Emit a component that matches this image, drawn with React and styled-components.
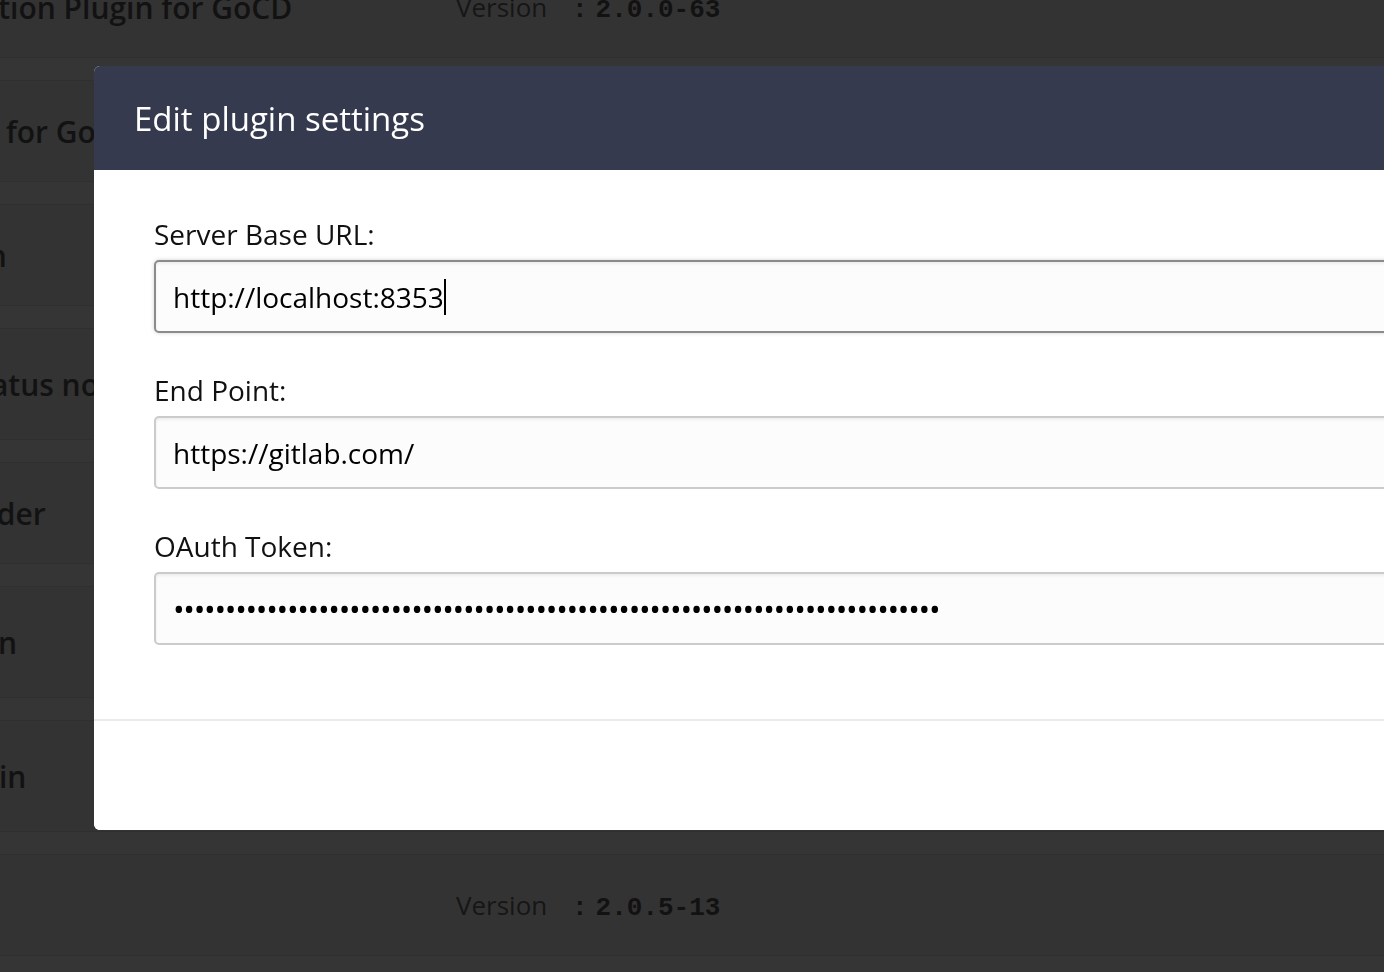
import React from "react";
import styled, { createGlobalStyle } from "styled-components";

const GlobalStyle = createGlobalStyle`
  html, body {
    margin: 0;
    padding: 0;
    background: #353535;
    overflow: hidden;
    font-family: "Open Sans", "Liberation Sans", sans-serif;
  }
  * { box-sizing: border-box; }
`;

/* ---------- dimmed plugin list behind the dialog ---------- */

const Page = styled.div`
  display: flex;
  flex-direction: column;
  gap: 22px;
  margin-top: -44px;
  margin-left: -348px;
  width: 1800px;
  height: 1100px;
  background: #353535;
`;

const PluginCard = styled.div`
  display: flex;
  align-items: center;
  height: ${(p) => p.$height}px;
  background: #333333;
  border-top: 1px solid #2f2f2f;
  border-bottom: 1px solid #2f2f2f;
`;

const PluginName = styled.div`
  flex: 0 0 804px;
  font-size: 30px;
  font-weight: 600;
  color: #121212;
  white-space: nowrap;
  overflow: hidden;
`;

const VersionBox = styled.div`
  display: flex;
  align-items: baseline;
  color: #161616;
`;

const VersionLabel = styled.span`
  flex: 0 0 116px;
  font-size: 26px;
  font-weight: 400;
`;

const Mono = styled.span`
  font-family: "Liberation Mono", "DejaVu Sans Mono", monospace;
  font-size: 26px;
  font-weight: 700;
  color: #121212;
  margin-left: ${(p) => (p.$gap ? "8px" : "0")};
`;

const plugins = [
  { name: "Password File Authorization Plugin for GoCD", version: "2.0.0-63", h: 102 },
  { name: "AD Authorization Plugin for GoCD", version: "2.0.1-41", h: 102 },
  { name: "AWS Elastic Agent Plugin", version: "1.0.2-91", h: 102 },
  { name: "GitHub Pull Requests status notifier", version: "1.2.0-12", h: 112 },
  { name: "GoCD YAML Configs Loader", version: "0.6.2-8", h: 102 },
  { name: "Kubernetes Elastic Plugin", version: "1.0.0-52", h: 112 },
  { name: "Okta Authorization Plugin", version: "1.0.0-4", h: 112 },
  { name: "Script Executor", version: "2.0.5-13", h: 102 },
];

/* ---------- dialog ---------- */

const Dialog = styled.div`
  position: fixed;
  top: 66px;
  left: 94px;
  width: 1340px;
  height: 764px;
  background: #ffffff;
  border-radius: 6px;
  overflow: hidden;
  display: flex;
  flex-direction: column;
`;

const DialogHeader = styled.header`
  flex: 0 0 104px;
  display: flex;
  align-items: center;
  padding-left: 40px;
  background: #353a4f;
`;

const DialogTitle = styled.h1`
  margin: 0;
  font-size: 33px;
  font-weight: 400;
  color: #ffffff;
`;

const DialogBody = styled.div`
  display: flex;
  flex-direction: column;
  gap: 37px;
  padding: 44px 0 74px 60px;
  border-bottom: 2px solid #e7ebee;
`;

const FieldGroup = styled.div`
  display: flex;
  flex-direction: column;
`;

const Label = styled.label`
  font-size: 28px;
  line-height: 40px;
  color: #111111;
  margin-bottom: 6px;
`;

const FieldShell = styled.div`
  display: flex;
  align-items: center;
  height: 73px;
  width: 1300px;
  padding: 0 17px;
  background: #fcfcfc;
  border: 2px solid ${(p) => (p.$focused ? "#8b8b8b" : "#cbcbcb")};
  border-radius: 5px;
  box-shadow: inset 0 2px 3px rgba(0, 0, 0, 0.06)
    ${(p) => (p.$focused ? ", 0 0 4px rgba(0, 0, 0, 0.18)" : "")};
`;

const FieldValue = styled.span`
  font-size: 28px;
  color: #000000;
  white-space: pre;
`;

const Caret = styled.span`
  display: inline-block;
  width: 2px;
  height: 36px;
  background: #000000;
`;

const TextInput = styled.input`
  flex: 1;
  border: none;
  outline: none;
  padding: 0;
  background: transparent;
  font-family: "Open Sans", "Liberation Sans", sans-serif;
  font-size: ${(p) => (p.type === "password" ? 31 : 28)}px;
  letter-spacing: ${(p) => (p.type === "password" ? "-1.3px" : "normal")};
  color: #000000;
`;

const DialogFooter = styled.footer`
  flex: 1;
  background: #ffffff;
`;

export default function App() {
  return (
    <>
      <GlobalStyle />
      <Page>
        {plugins.map((p) => (
          <PluginCard key={p.name} $height={p.h}>
            <PluginName>{p.name}</PluginName>
            <VersionBox>
              <VersionLabel>Version</VersionLabel>
              <Mono>:</Mono>
              <Mono $gap>{p.version}</Mono>
            </VersionBox>
          </PluginCard>
        ))}
      </Page>

      <Dialog role="dialog" aria-label="Edit plugin settings">
        <DialogHeader>
          <DialogTitle>Edit plugin settings</DialogTitle>
        </DialogHeader>
        <DialogBody>
          <FieldGroup>
            <Label>Server Base URL:</Label>
            <FieldShell $focused>
              <FieldValue>http://localhost:8353</FieldValue>
              <Caret />
            </FieldShell>
          </FieldGroup>
          <FieldGroup>
            <Label>End Point:</Label>
            <FieldShell>
              <TextInput type="text" defaultValue="https://gitlab.com/" readOnly />
            </FieldShell>
          </FieldGroup>
          <FieldGroup>
            <Label>OAuth Token:</Label>
            <FieldShell>
              <TextInput type="password" defaultValue={"x".repeat(74)} readOnly />
            </FieldShell>
          </FieldGroup>
        </DialogBody>
        <DialogFooter />
      </Dialog>
    </>
  );
}
